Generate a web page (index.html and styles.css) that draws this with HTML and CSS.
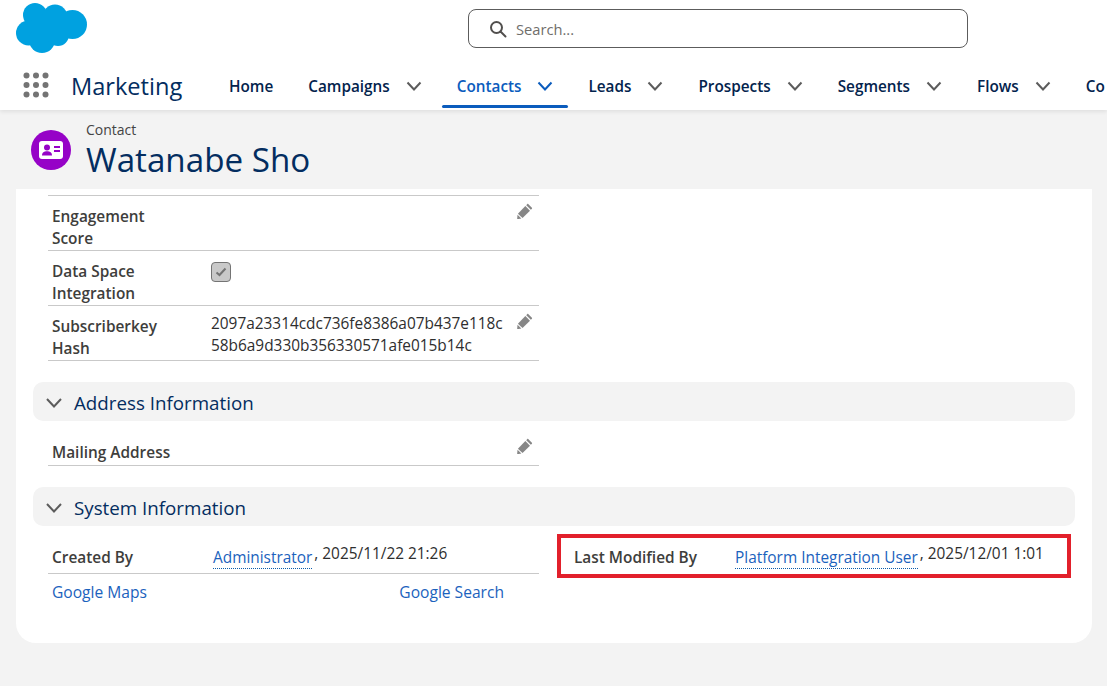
FILE: index.html
```html
<!DOCTYPE html>
<html lang="en">
<head>
    <meta charset="UTF-8">
    <title>Watanabe Sho | Contact</title>
    <link rel="stylesheet" href="styles.css">
</head>
<body>
    <header class="topbar">
        <div class="top-row">
            <svg class="logo" width="72" height="52" viewBox="16 3 72 52">
                <g fill="#00a1e0">
                    <circle cx="35" cy="15" r="12"/>
                    <circle cx="55" cy="17" r="12.5"/>
                    <circle cx="72.5" cy="24.5" r="14.5"/>
                    <circle cx="28.5" cy="33" r="12.5"/>
                    <circle cx="42" cy="40" r="13"/>
                    <circle cx="58" cy="35" r="11"/>
                    <rect x="32" y="16" width="36" height="20"/>
                </g>
            </svg>
            <div class="search">
                <svg width="18" height="18" viewBox="0 0 18 18" fill="none" stroke="#514f4d" stroke-width="2">
                    <circle cx="7.5" cy="7.5" r="5.5"/>
                    <path d="M11.5 11.5 16.5 16.5" stroke-linecap="round"/>
                </svg>
                <span>Search...</span>
            </div>
        </div>
        <nav class="nav-row">
            <svg class="waffle" width="26" height="26" viewBox="0 0 26 26" fill="#747474">
                <circle cx="3.5" cy="3.5" r="3"/><circle cx="13" cy="3.5" r="3"/><circle cx="22.5" cy="3.5" r="3"/>
                <circle cx="3.5" cy="13" r="3"/><circle cx="13" cy="13" r="3"/><circle cx="22.5" cy="13" r="3"/>
                <circle cx="3.5" cy="22.5" r="3"/><circle cx="13" cy="22.5" r="3"/><circle cx="22.5" cy="22.5" r="3"/>
            </svg>
            <span class="app-name">Marketing</span>
            <div class="tabs">
                <a class="tab">Home</a>
                <a class="tab">Campaigns <svg class="chev" viewBox="0 0 16 10"><path d="M1.5 1.5 8 8.5 14.5 1.5"/></svg></a>
                <a class="tab active">Contacts <svg class="chev" viewBox="0 0 16 10"><path d="M1.5 1.5 8 8.5 14.5 1.5"/></svg></a>
                <a class="tab">Leads <svg class="chev" viewBox="0 0 16 10"><path d="M1.5 1.5 8 8.5 14.5 1.5"/></svg></a>
                <a class="tab">Prospects <svg class="chev" viewBox="0 0 16 10"><path d="M1.5 1.5 8 8.5 14.5 1.5"/></svg></a>
                <a class="tab">Segments <svg class="chev" viewBox="0 0 16 10"><path d="M1.5 1.5 8 8.5 14.5 1.5"/></svg></a>
                <a class="tab">Flows <svg class="chev" viewBox="0 0 16 10"><path d="M1.5 1.5 8 8.5 14.5 1.5"/></svg></a>
                <a class="tab">Co</a>
            </div>
        </nav>
    </header>

    <div class="record-head">
        <div class="record-icon">
            <svg width="26" height="20" viewBox="0 0 26 20">
                <rect x="1" y="1" width="24" height="18" rx="3" fill="#fff"/>
                <circle cx="9" cy="7.5" r="3" fill="#9602c7"/>
                <path d="M4 15.5c0-3 2.2-4.2 5-4.2s5 1.2 5 4.2z" fill="#9602c7"/>
                <path d="M16 7h6M16 11h6" stroke="#9602c7" stroke-width="2"/>
            </svg>
        </div>
        <div>
            <div class="record-type">Contact</div>
            <h1>Watanabe Sho</h1>
        </div>
    </div>

    <main class="card">
        <div class="half">
            <div class="row first">
                <div class="label">Engagement<br>Score</div>
                <div class="value"></div>
                <svg class="pencil" width="16" height="16" viewBox="0 0 18 18"><use href="#pencil"/></svg>
            </div>
            <div class="row">
                <div class="label">Data Space<br>Integration</div>
                <div class="value">
                    <span class="checkbox">
                        <svg width="12" height="10" viewBox="0 0 12 10" fill="none" stroke="#747474" stroke-width="2"><path d="M1.5 5.5 4.5 8 10.5 1.5"/></svg>
                    </span>
                </div>
            </div>
            <div class="row">
                <div class="label">Subscriberkey<br>Hash</div>
                <div class="value hash">2097a23314cdc736fe8386a07b437e118c<br>58b6a9d330b356330571afe015b14c</div>
                <svg class="pencil" width="16" height="16" viewBox="0 0 18 18"><use href="#pencil"/></svg>
            </div>
        </div>

        <div class="section-bar">
            <svg class="section-chev" viewBox="0 0 16 10"><path d="M1 1 8 8.5 15 1"/></svg>
            <span>Address Information</span>
        </div>
        <div class="half">
            <div class="row single">
                <div class="label">Mailing Address</div>
                <svg class="pencil" width="16" height="16" viewBox="0 0 18 18"><use href="#pencil"/></svg>
            </div>
        </div>

        <div class="section-bar">
            <svg class="section-chev" viewBox="0 0 16 10"><path d="M1 1 8 8.5 15 1"/></svg>
            <span>System Information</span>
        </div>
        <div class="system-cols">
            <div class="half">
                <div class="row system">
                    <div class="label">Created By</div>
                    <div class="value"><a class="user-link">Administrator</a><span class="comma">,</span> 2025/11/22 21:26</div>
                </div>
            </div>
            <div class="system-right">
                <div class="label">Last Modified By</div>
                <div class="value"><a class="user-link">Platform Integration User</a><span class="comma">,</span> 2025/12/01 1:01</div>
            </div>
        </div>
        <div class="half links">
            <a>Google Maps</a>
            <a>Google Search</a>
        </div>
    </main>

    <svg width="0" height="0" class="defs">
        <defs>
            <g id="pencil" fill="#868686">
                <path d="M12.6 1.2 16.8 5.4c.3.3.3.7 0 1L15.6 7.6 10.4 2.4 11.6 1.2c.3-.3.7-.3 1 0z"/>
                <path d="M9.4 3.4 14.6 8.6 6.2 17 1 12z"/>
                <path d="M.6 13.2 4.9 17.4 .9 18.2c-.4 0-.8-.3-.7-.7z"/>
            </g>
        </defs>
    </svg>
</body>
</html>
```

FILE: styles.css
```css
body {
    margin: 0;
    min-height: 686px;
    overflow: hidden;
    background: #f3f3f3;
    font-family: "Open Sans", "Noto Sans", sans-serif;
    font-size: 15.4px;
    color: #181818;
}

a {
    text-decoration: none;
}

.defs {
    position: absolute;
}

/* top bar */
.topbar {
    position: relative;
    height: 110px;
    background: #fff;
    box-shadow: 0 2px 4px rgba(0, 0, 0, 0.08);
}

.top-row {
    display: flex;
    height: 62px;
    padding: 3px 0 0 16px;
    box-sizing: border-box;
}

.search {
    display: flex;
    align-items: center;
    gap: 9px;
    width: 500px;
    height: 39px;
    margin: 6px 0 0 380px;
    padding-left: 20px;
    box-sizing: border-box;
    border: 1px solid #5c5c5c;
    border-radius: 8px;
    font-size: 14.7px;
    color: #706e6b;
}

.nav-row {
    display: flex;
    align-items: center;
    height: 48px;
}

.waffle {
    flex: none;
    margin-left: 23px;
    margin-bottom: 2px;
}

.app-name {
    flex: none;
    margin-left: 22px;
    width: 143px;
    font-size: 23.6px;
    color: #032d60;
}

.tabs {
    display: flex;
    flex: none;
    gap: 5px;
    height: 100%;
    white-space: nowrap;
}

.tab {
    display: flex;
    align-items: center;
    gap: 16px;
    padding: 0 15px;
    height: 100%;
    font-size: 15.3px;
    font-weight: 600;
    color: #03234d;
    stroke: #5c5c5c;
}

.tab.active {
    position: relative;
    color: #0b5cbd;
    stroke: #0b5cbd;
}

.tab.active::after {
    content: "";
    position: absolute;
    left: 0;
    right: 0;
    bottom: 2px;
    height: 3px;
    border-radius: 2px;
    background: #0b5cbd;
}

.chev {
    width: 16px;
    height: 10px;
    fill: none;
    stroke-width: 2;
}

/* record header */
.record-head {
    display: flex;
    align-items: center;
    gap: 15px;
    height: 79px;
    padding-left: 31px;
    box-sizing: border-box;
}

.record-icon {
    display: flex;
    align-items: center;
    justify-content: center;
    width: 40px;
    height: 40px;
    border-radius: 50%;
    background: #9602c7;
}

.record-type {
    font-size: 14px;
    line-height: 20px;
    color: #444;
}

h1 {
    margin: 0;
    font-size: 33.2px;
    font-weight: 400;
    line-height: 40px;
    color: #032d60;
}

/* card */
.card {
    height: 454px;
    margin: 0 15px 0 16px;
    padding: 6px 17px 0;
    box-sizing: border-box;
    background: #fff;
    border-radius: 0 0 20px 20px;
}

.half {
    width: 491px;
    margin-left: 15px;
}

.row {
    display: flex;
    position: relative;
    height: 55px;
    box-sizing: border-box;
    padding: 10px 4px 0;
    border-bottom: 1px solid #c9c9c9;
    line-height: 22px;
}

.row.first {
    height: 56px;
    border-top: 1px solid #c9c9c9;
}

.row.single {
    height: 35px;
    margin-top: 10px;
    padding-top: 11px;
}

.label {
    width: 159px;
    flex: none;
    font-weight: 600;
    color: #3e3e3c;
}

.value {
    color: #2e2e2e;
}

.hash {
    margin-top: -3px;
}

.pencil {
    position: absolute;
    right: 6px;
    top: 7px;
}

.checkbox {
    display: flex;
    align-items: center;
    justify-content: center;
    width: 20px;
    height: 20px;
    box-sizing: border-box;
    margin-top: 1px;
    background: #c9c9c9;
    border: 1px solid #747474;
    border-radius: 4px;
}

.section-bar {
    display: flex;
    align-items: center;
    gap: 12px;
    height: 39px;
    margin-top: 21px;
    padding: 2px 0 0 13px;
    box-sizing: border-box;
    background: #f3f3f3;
    border-radius: 10px;
    font-size: 18.75px;
    color: #032d60;
}

.section-chev {
    width: 16px;
    height: 10px;
    fill: none;
    stroke: #5c5c5c;
    stroke-width: 2;
}

.system-cols {
    display: flex;
}

.system-cols .row {
    height: 48px;
    padding-top: 21px;
}

.system-right {
    display: flex;
    position: relative;
    margin-left: 35px;
    padding: 21px 0 0 0;
    line-height: 22px;
}

/* annotation drawn over the record */
.system-right::after {
    content: "";
    position: absolute;
    left: -17px;
    top: 8px;
    width: 506px;
    height: 36px;
    border: 4px solid #e2202b;
}

.system-right .label {
    width: 159px;
}

.user-link {
    position: relative;
    top: 4px;
    color: #1b62bd;
    border-bottom: 1px dotted #0b5cab;
}

.comma {
    margin: 0 0 0 2px;
}

.system .value,
.system-right .value {
    margin-left: 2px;
    margin-top: -4px;
}

.links {
    display: flex;
    justify-content: space-between;
    padding: 7px 35px 0 4px;
    box-sizing: border-box;
    font-size: 15.6px;
    color: #1b62bd;
}
```
